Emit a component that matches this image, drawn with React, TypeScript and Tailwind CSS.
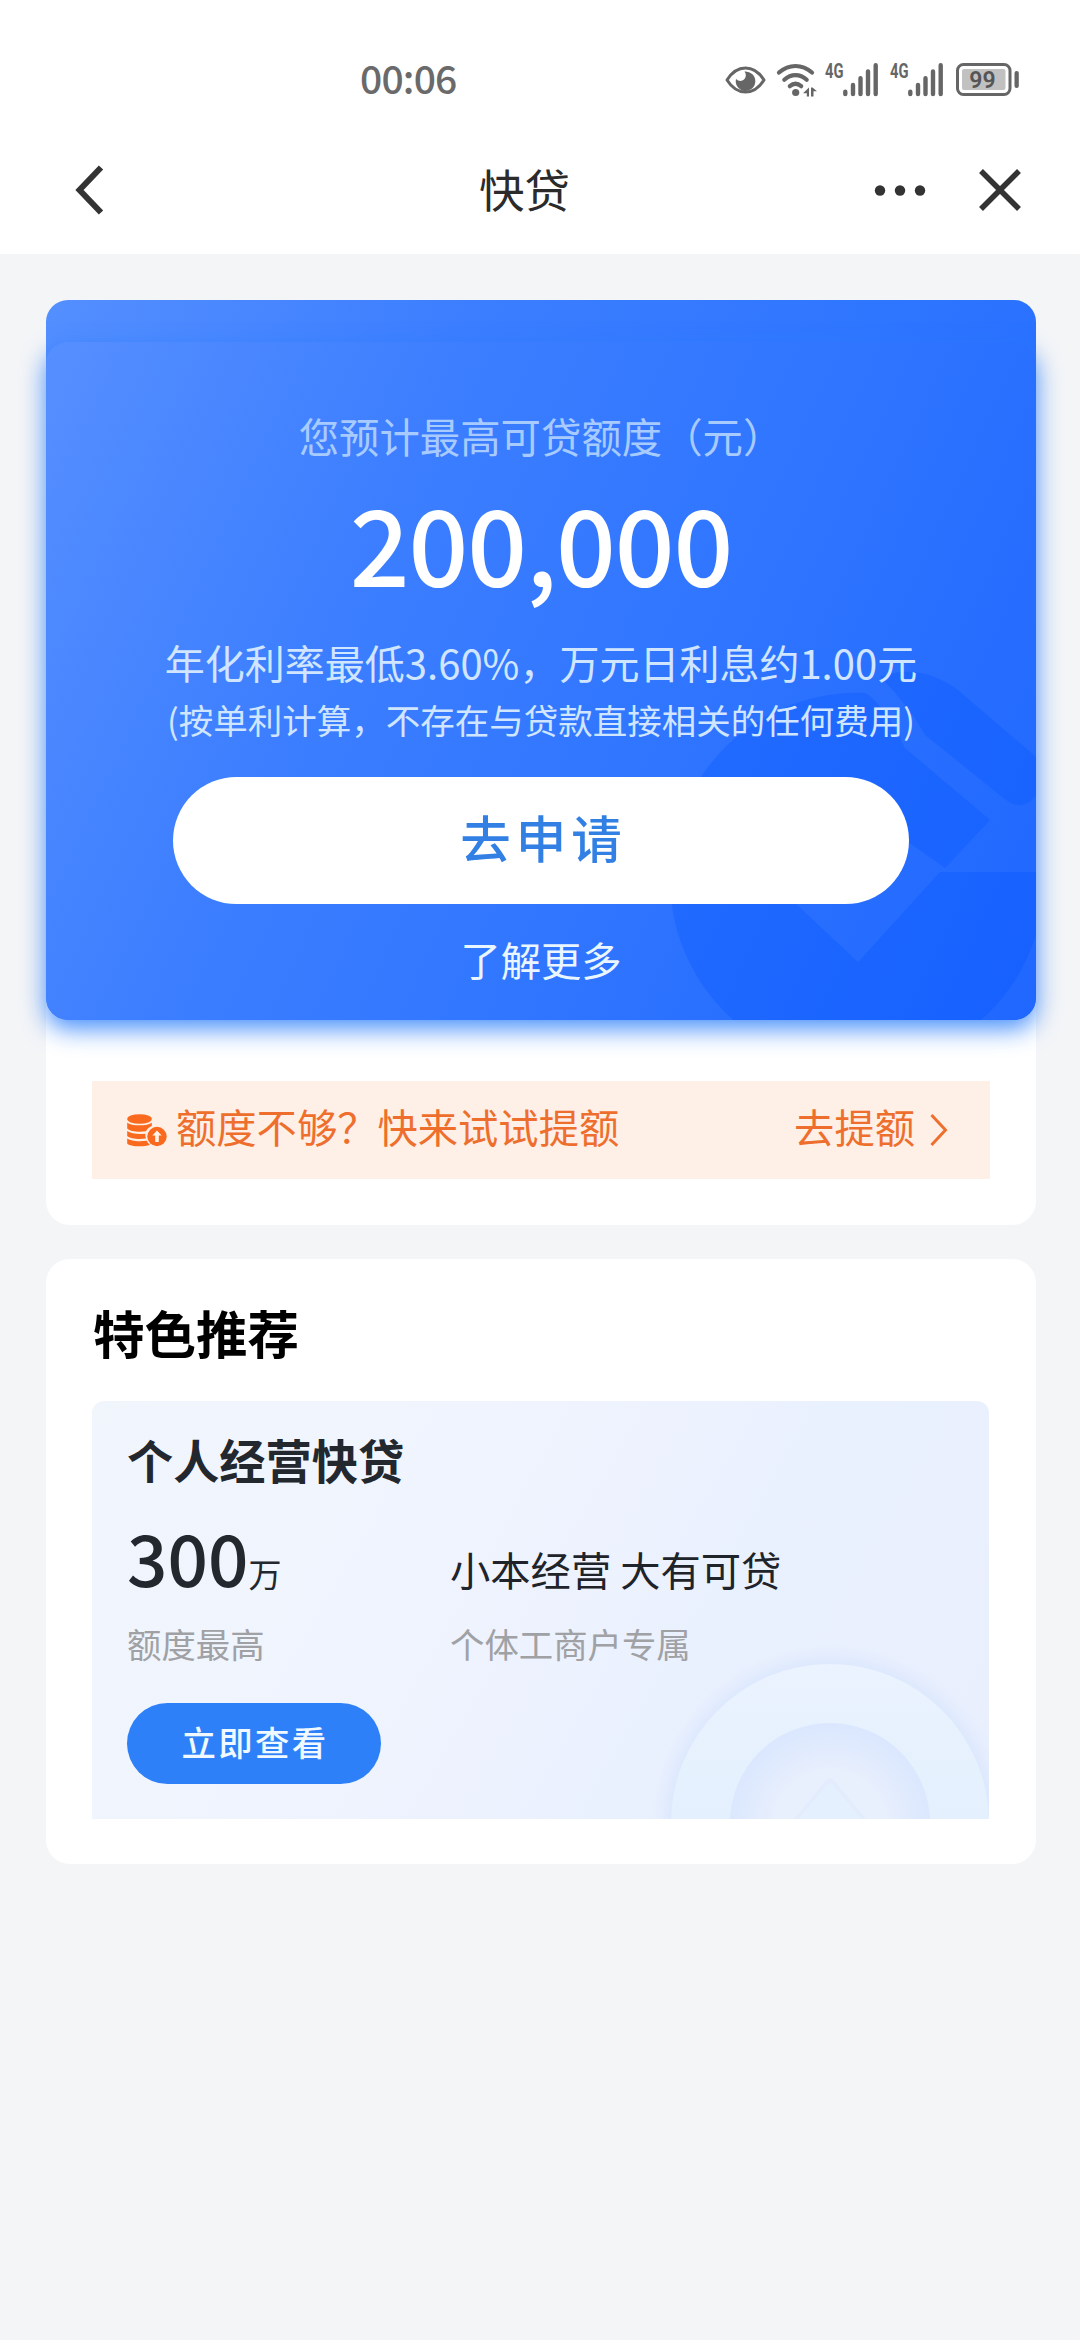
function EyeIcon() {
  return (
    <svg width="41" height="28" viewBox="0 0 41 28" fill="none">
      <path d="M2 14C7 6 13.500 2 20.500 2S34 6 39 14C34 22 27.500 26 20.500 26S7 22 2 14Z" stroke="#666" strokeWidth="3" strokeLinejoin="round" />
      <path d="M19.500 5.500A9.800 9.800 0 1 1 11 13C13.500 15.500 17 15.500 19 13.500C21.300 11.300 21.500 8 19.500 5.500Z" fill="#666" />
    </svg>
  );
}

function WifiIcon() {
  return (
    <svg width="41" height="34" viewBox="0 0 41 34" fill="none">
      <g stroke="#666" strokeWidth="4.200" strokeLinecap="round">
        <path d="M3 9.500C13 .8 26 .8 36 9.500" />
        <path d="M8.300 16.800C15 10.600 24 10.600 30.700 16.800" />
        <path d="M13.800 23.200C17.500 20 21.500 20 25.200 23.200" />
      </g>
      <circle cx="19.700" cy="29.500" r="3.600" fill="#666" />
      <path d="M33 24.500V33.500H30.800V30.300H27ZM35 33.500V24.500H36.500L41 28.300H37.500V33.500Z" fill="#666" />
    </svg>
  );
}

function SignalIcon() {
  return (
    <svg width="53" height="44" viewBox="0 -5 53 44" fill="none">
      <text x="0" y="15" fontFamily="Roboto, sans-serif" fontWeight="700" fontSize="20" textLength="18.500" lengthAdjust="spacingAndGlyphs" fill="#666">
        4G
      </text>
      <path d="M20.300 28.700V31M28 22V31M35.500 15.300V31M43 8.500V31M50.700 2.200V31" stroke="#666" strokeWidth="4.400" strokeLinecap="round" />
    </svg>
  );
}

function BatteryIcon() {
  return (
    <svg width="63" height="33" viewBox="0 0 63 33" fill="none">
      <rect x="1.500" y="1.500" width="52.500" height="30" rx="6" stroke="#666" strokeWidth="3" />
      <rect x="6" y="6" width="43.500" height="21" rx="2" fill="#c1c1c1" />
      <rect x="58.500" y="8" width="4.300" height="17" rx="2.100" fill="#666" />
      <text x="26.500" y="24.500" textAnchor="middle" fontFamily="Roboto, sans-serif" fontWeight="600" fontSize="23" fill="#555">
        99
      </text>
    </svg>
  );
}

function CoinsIcon() {
  return (
    <svg width="40" height="33" viewBox="0 0 40 33" fill="#fa6a1e">
      <ellipse cx="12.500" cy="5" rx="12.300" ry="4.800" />
      <path d="M.2 8.500C4 12.300 21 12.300 24.800 8.500V12C22 13 20 15 19 17.300C12 18.400 3 17.600.2 14.500Z" />
      <path d="M.2 17C3.500 19.600 11 20.400 18.300 19.700C18.200 21.500 18.400 23 19 24.500C12 25.600 3 24.800.2 22Z" />
      <path d="M.2 24.500C3.500 27 12 27.800 19.800 26.700C20.600 28.400 21.600 29.700 23 30.800C16 33.500 2.500 32.500.2 29.500Z" />
      <circle cx="30" cy="22.500" r="9.700" />
      <path d="M30 16.500L34.600 21.500H31.800V28H28.200V21.500H25.400Z" fill="#fff3ea" />
    </svg>
  );
}

function CardWatermark() {
  return (
    <svg className="absolute right-0 bottom-0 rounded-br-[22px]" width="386" height="370" viewBox="650 650 386 370">
      <g fill="#0050ff" fillOpacity="0.270">
        <path d="M940 872L858 962L795 903L870 815L908 842L945 868L990 820L905 748Q885 706 866 693A187 187 0 1 0 1044 872Z" />
        <path d="M880 677Q920 662 958 690L1036 757V796Q1022 812 1006 800L925 735Q908 704 880 677Z" />
      </g>
    </svg>
  );
}

function PromoEmblem() {
  return (
    <svg className="absolute right-0 bottom-0" width="350" height="200" viewBox="639 1619 350 200">
      <defs>
        <radialGradient id="halo" gradientUnits="userSpaceOnUse" cx="830" cy="1823" r="180">
          <stop offset="0.870" stopColor="#d8e5fd" stopOpacity="0.800" />
          <stop offset="1" stopColor="#dfeafe" stopOpacity="0" />
        </radialGradient>
        <radialGradient id="well" gradientUnits="userSpaceOnUse" cx="830" cy="1827" r="103">
          <stop offset="0.550" stopColor="#e8effd" />
          <stop offset="1" stopColor="#dae7fe" />
        </radialGradient>
        <linearGradient id="ring" x1="0" y1="0" x2="0" y2="1">
          <stop offset="0" stopColor="#eaf3fe" />
          <stop offset="0.500" stopColor="#e4f0fe" />
        </linearGradient>
      </defs>
      <circle cx="830" cy="1823" r="180" fill="url(#halo)" />
      <circle cx="830" cy="1823" r="159" fill="url(#ring)" />
      <circle cx="830" cy="1823" r="100" fill="url(#well)" />
      <path d="M790 1824L826 1781Q830 1776 834 1781L870 1824Z" fill="#e3ecfd" />
      <path d="M794 1824L827 1798L830 1795L833 1798L866 1824Z" fill="#e4effe" />
      <path d="M794 1824L827 1785Q830 1782 833 1785L866 1824Z" fill="#e5f0fe" />
    </svg>
  );
}

function StatusBar() {
  return (
    <div className="flex h-[126px] items-center pt-[33px] pr-[61px] pl-[360px]">
      <span className="pb-[5px] text-[39px] leading-[40px] font-medium tracking-[-0.800px] text-[#6a6a6a]">00:06</span>
      <div className="ml-auto flex items-center">
        <EyeIcon />
        <span className="ml-[10px]"><WifiIcon /></span>
        <span className="ml-[8px]"><SignalIcon /></span>
        <span className="ml-[12px]"><SignalIcon /></span>
        <span className="ml-[13px]"><BatteryIcon /></span>
      </div>
    </div>
  );
}

function NavBar() {
  return (
    <div className="flex h-[128px] items-center pr-[59px] pl-[75px]">
      <svg width="30" height="50" viewBox="0 0 30 50" fill="none">
        <path d="M26 2.500L4.500 25L26 47.500" stroke="#333" strokeWidth="6" />
      </svg>
      <h1 className="ml-[374px] pb-[4px] text-[45.500px] leading-[60px] font-normal text-[#2b2b2b]">快贷</h1>
      <svg className="ml-auto" width="52" height="12" viewBox="0 0 52 12" fill="#333">
        <circle cx="6" cy="6.500" r="5.200" />
        <circle cx="26" cy="6.500" r="5.200" />
        <circle cx="46" cy="6.500" r="5.200" />
      </svg>
      <svg className="ml-[53px]" width="42" height="42" viewBox="0 0 42 42" fill="none">
        <path d="M2 2L40 40M40 2L2 40" stroke="#333" strokeWidth="5.500" />
      </svg>
    </div>
  );
}

function LoanCard() {
  return (
    <section className="h-[925px] rounded-[24px] bg-white">
      <div className="rounded-[22px] bg-linear-[115deg,#548fff_0%,#3c7eff_32%,#2f76ff_62%,#2069ff_100%] pt-[42px]">
        <div className="relative flex h-[678px] flex-col items-center rounded-[22px] bg-linear-[115deg,#568fff_0%,#3c7eff_32%,#2f75ff_62%,#1f67ff_100%] pt-[66px] shadow-[0_9px_24px_rgba(40,125,250,0.850)]">
          <CardWatermark />
          <p className="relative text-[40.400px] leading-[56px] text-[#a8cbff]">您预计最高可贷额度（元）</p>
          <p className="relative mt-[27px] text-[105px] leading-[100px] font-medium tracking-[-1.100px] text-white">200,000</p>
          <p className="relative mt-[43px] text-[40px] leading-[56px] text-[#d0e5ff]">年化利率最低3.60%，万元日利息约1.00元</p>
          <p className="relative mt-[7px] text-[34.500px] leading-[44px] text-[#d0e5ff]">(按单利计算，不存在与贷款直接相关的任何费用)</p>
          <button className="relative mt-[36px] flex h-[127px] w-[736px] items-center justify-center rounded-full bg-white pb-[9px] pl-[5px] text-[50.500px] leading-[60px] font-medium tracking-[5px] text-[#3380e4]">
            去申请
          </button>
          <a className="relative mt-[30px] text-[40.300px] leading-[50px] text-[#eaf6ff]">了解更多</a>
        </div>
      </div>
      <div className="mt-[61px] mr-[46px] ml-[46px] flex h-[98px] items-center bg-[#fef0e7] pr-[42px] pl-[35px] text-[40.300px] text-[#ee6f2d]">
        <CoinsIcon />
        <span className="ml-[9px] pb-[8px] leading-[50px]">额度不够？快来试试提额</span>
        <span className="ml-auto pb-[8px] leading-[50px]">去提额</span>
        <svg className="ml-[15px]" width="18" height="34" viewBox="0 0 18 34" fill="none">
          <path d="M1.500 2L15.500 17L1.500 32" stroke="#ee6f2d" strokeWidth="3" />
        </svg>
      </div>
    </section>
  );
}

function FeaturedCard() {
  return (
    <section className="mt-[34px] h-[605px] rounded-[24px] bg-white px-[46px] pt-[41px]">
      <h2 className="ml-[1px] text-[51.500px] leading-[64px] font-bold text-black">特色推荐</h2>
      <div className="relative mt-[37px] h-[418px] w-[897px] overflow-hidden rounded-t-[12px] bg-linear-[120deg,#f1f6fd_0%,#f0f4fe_35%,#eaf1fe_65%,#e9effd_100%] px-[35px] pt-[30px]">
        <PromoEmblem />
        <h3 className="relative text-[46.200px] leading-[56px] font-bold text-[#23272e]">个人经营快贷</h3>
        <div className="relative mt-[31px] grid grid-cols-[323px_1fr]">
          <div>
            <p className="flex h-[94px] items-baseline leading-[76px] text-[#23272e]">
              <span className="text-[71px] font-medium">300</span>
              <span className="text-[33px]">万</span>
            </p>
            <p className="mt-[9px] text-[34.400px] leading-[44px] text-[#a0a1a4]">额度最高</p>
          </div>
          <div>
            <p className="pt-[26px] text-[40.300px] leading-[50px] text-[#1f232a]">小本经营 大有可贷</p>
            <p className="mt-[27px] text-[34.400px] leading-[44px] text-[#a0a1a4]">个体工商户专属</p>
          </div>
        </div>
        <button className="relative mt-[38px] flex h-[81px] w-[254px] items-center justify-center rounded-full bg-[#2e80f8] pb-[5px] pl-[2px] text-[34.400px] leading-[44px] font-medium tracking-[2.400px] text-[#f0f9ff]">
          立即查看
        </button>
      </div>
    </section>
  );
}

export default function App() {
  return (
    <div className="h-[2340px] w-[1080px] overflow-hidden bg-[#f4f5f7] font-['Noto_Sans_CJK_SC',sans-serif]">
      <header className="bg-white">
        <StatusBar />
        <NavBar />
      </header>
      <main className="pt-[46px] pr-[44px] pl-[46px]">
        <LoanCard />
        <FeaturedCard />
      </main>
    </div>
  );
}
